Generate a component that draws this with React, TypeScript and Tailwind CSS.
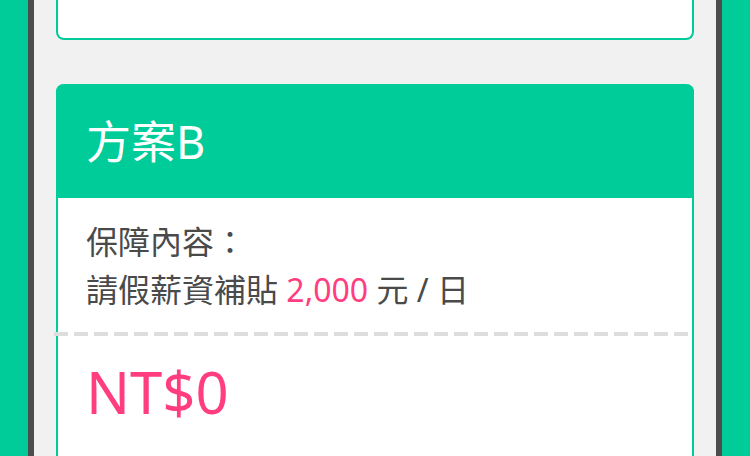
export default function App() {
  return (
    <div className="flex h-[456px] w-[750px] overflow-hidden bg-[#f1f1f1] font-['Noto_Sans','Noto_Sans_CJK_TC',sans-serif]">
      <div className="w-[28px] shrink-0 bg-[#00cc99]" />
      <div className="w-[6px] shrink-0 bg-[#4d4d4d]" />

      <main className="flex flex-1 flex-col px-[22px]">
        {/* previous plan, cut off at the top */}
        <div className="h-[40px] shrink-0 rounded-b-[8px] border-2 border-t-0 border-[#00cc99] bg-white" />

        {/* plan B */}
        <section className="mt-[44px] flex shrink-0 flex-col rounded-[8px] border-2 border-t-0 border-[#00cc99] bg-white">
          <div className="-mx-[2px] flex h-[114px] shrink-0 items-center rounded-t-[8px] bg-[#00cc99] px-[30px] text-[45px] leading-none text-white">
            方案B
          </div>
          <div className="px-[28px] pt-[20px] pb-[18px] text-[32px] leading-[48px] text-[#4a4a4a]">
            <p>保障內容：</p>
            <p>
              請假薪資補貼 <span className="text-[#ff3d7f]">2,000</span> 元 / 日
            </p>
          </div>
          <div className="-ml-[4px] h-[4px] bg-[repeating-linear-gradient(90deg,#dddddd_0_14px,transparent_14px_20px)]" />
          <div className="px-[28px] pt-[27px] pb-[60px] text-[58px] leading-none text-[#ff3d7f]">NT$0</div>
        </section>
      </main>

      <div className="w-[6px] shrink-0 bg-[#4d4d4d]" />
      <div className="w-[28px] shrink-0 bg-[#00cc99]" />
    </div>
  );
}
